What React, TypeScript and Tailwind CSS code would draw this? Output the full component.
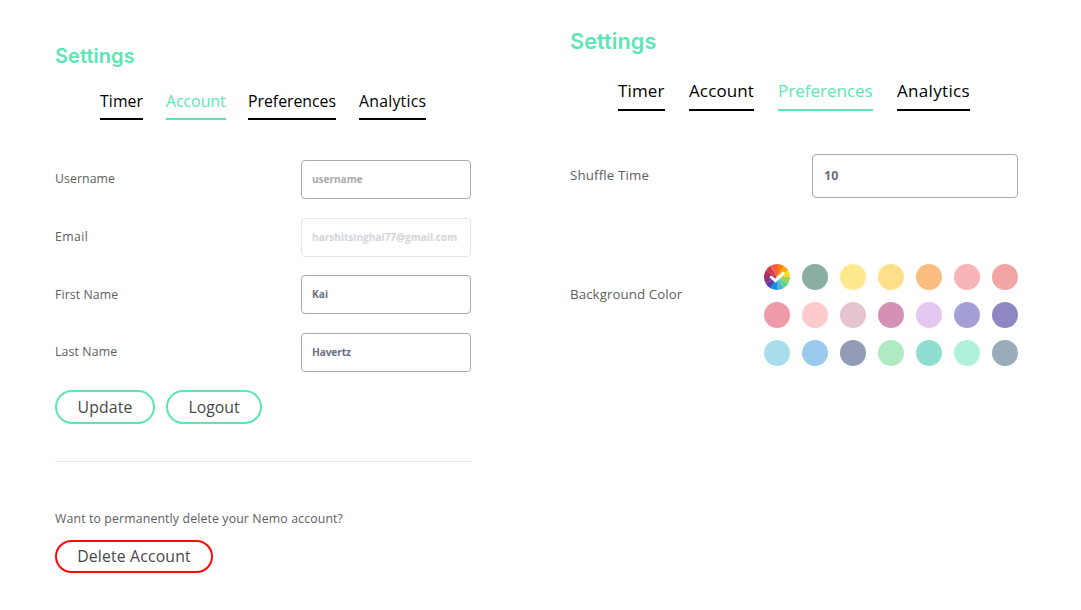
import React from 'react';

function Swatch({ color }: { color: string }) {
  return <div className="size-[26px] rounded-full" style={{ backgroundColor: color }} />;
}

const wheel = ['#ff7b00', '#ffa412', '#ffdc14', '#97d35a', '#62d38c', '#4cb5dc', '#128ee8', '#533fa8', '#8c3189', '#b62c5a', '#d63a42', '#ff5a58'];

function point(deg: number) {
  const a = (deg * Math.PI) / 180;
  return `${13 + 13 * Math.sin(a)} ${13 - 13 * Math.cos(a)}`;
}

function ColorWheel() {
  return (
    <svg className="size-[26px]" viewBox="0 0 26 26">
      {wheel.map((c, i) => (
        <path key={c} fill={c} d={`M13 13L${point(i * 30)}A13 13 0 0 1 ${point(i * 30 + 30.5)}Z`} />
      ))}
      <path d="M7.2 13.2L11.4 16.7L19 9.4" fill="none" stroke="#fff" strokeWidth="3" strokeLinecap="round" />
    </svg>
  );
}

const colors = [
  '#8aaea2', '#ffe78d', '#ffdf8a', '#fdbd81', '#f8b4b6', '#f2a5a4',
  '#ee9aa9', '#fdcbcb', '#e6c3d1', '#d491b4', '#e5c8f0', '#a49fd6', '#8e87c3',
  '#aaddea', '#9acbee', '#949bb7', '#b0eac3', '#8edfcf', '#aff2d9', '#9aabb9',
];

export default function App() {
  return (
    <div className="flex h-[610px] w-[1081px] overflow-hidden bg-white font-['Open_Sans','Noto_Sans',sans-serif] whitespace-nowrap text-[#606060]">
      <section className="ml-[55px] w-[416px] pt-[42px]">
        <h1 className="h-7 font-['Inter',sans-serif] text-[20px] leading-7 font-semibold tracking-[0.05px] text-[#5ce5b5]">Settings</h1>
        <nav className="mt-5 ml-[45px] flex h-[30px] text-[15.8px] leading-[23px] text-black">
          <a className="mr-[23px] w-[43px] border-b-2 border-black tracking-[0.1px]">Timer</a>
          <a className="mr-[22px] w-[60px] border-b-2 border-[#5ce5b5] text-[#5ce5b5]">Account</a>
          <a className="mr-[23px] w-[88px] border-b-2 border-black">Preferences</a>
          <a className="w-[67px] border-b-2 border-black tracking-[0.25px]">Analytics</a>
        </nav>
        <form className="mt-10 grid h-[212px] grid-cols-[1fr_170px] content-between text-[12.3px]">
          <label className="self-center tracking-[0.08px]">Username</label>
          <div className="h-[39px] rounded-[4px] border border-[#aaa] pl-2.5 text-[10.2px] leading-[36px] font-bold tracking-[-0.1px] text-[#aaa]">username</div>
          <label className="self-center tracking-[0.4px]">Email</label>
          <div className="h-[39px] rounded-[4px] border border-[#e5e5e5] pl-2.5 text-[10.2px] leading-[36px] font-bold tracking-[-0.06px] text-[#d3d4d9]">harshitsinghai77@gmail.com</div>
          <label className="self-center tracking-[0.1px]">First Name</label>
          <div className="h-[39px] rounded-[4px] border border-[#aaa] pl-2.5 text-[10.2px] leading-[36px] font-bold text-[#6b7080]">Kai</div>
          <label className="self-center tracking-[0.13px]">Last Name</label>
          <div className="h-[39px] rounded-[4px] border border-[#aaa] pl-2.5 text-[10.2px] leading-[36px] font-bold tracking-[-0.15px] text-[#6b7080]">Havertz</div>
        </form>
        <div className="mt-[18px] flex gap-[11px] text-[15.8px] leading-[30px] text-[#484848]">
          <button className="h-[34px] w-[100px] rounded-full border-2 border-[#5ce5b5] tracking-[0.15px]">Update</button>
          <button className="h-[34px] w-[96px] rounded-full border-2 border-[#5ce5b5]">Logout</button>
        </div>
        <hr className="mt-[37px] border-[#e4e4e4]" />
        <p className="mt-[47px] h-5 text-[12.3px] leading-5 tracking-[0.135px]">Want to permanently delete your Nemo account?</p>
        <button className="mt-[11px] h-[33px] w-[158px] rounded-full border-2 border-[#ff0808] text-[15.8px] leading-[29px] tracking-[0.15px] text-[#484848]">Delete Account</button>
      </section>
      <section className="ml-[99px] w-[448px] pt-[27px]">
        <h1 className="h-[30px] font-['Inter',sans-serif] text-[21.6px] leading-[29px] font-semibold tracking-[0.1px] text-[#5ce5b5]">Settings</h1>
        <nav className="mt-[22px] ml-12 flex h-8 gap-6 text-[17px] leading-6 text-black">
          <a className="w-[47px] border-b-2 border-black tracking-[0.15px]">Timer</a>
          <a className="w-[65px] border-b-2 border-black tracking-[0.12px]">Account</a>
          <a className="w-[95px] border-b-2 border-[#5ce5b5] text-[#5ce5b5]">Preferences</a>
          <a className="w-[73px] border-b-2 border-black tracking-[0.32px]">Analytics</a>
        </nav>
        <div className="mt-[43px] flex items-center justify-between text-[13.3px]">
          <label className="tracking-[0.16px]">Shuffle Time</label>
          <div className="h-11 w-[206px] rounded-[4px] border border-[#aaa] pl-[11px] text-[12.5px] leading-[41px] font-bold text-[#6b7080]">10</div>
        </div>
        <div className="mt-[66px] flex justify-between text-[13.3px]">
          <label className="pt-5 leading-5 tracking-[0.08px]">Background Color</label>
          <div className="grid grid-cols-7 gap-3">
            <ColorWheel />
            {colors.map((c) => <Swatch key={c} color={c} />)}
          </div>
        </div>
      </section>
    </div>
  );
}
